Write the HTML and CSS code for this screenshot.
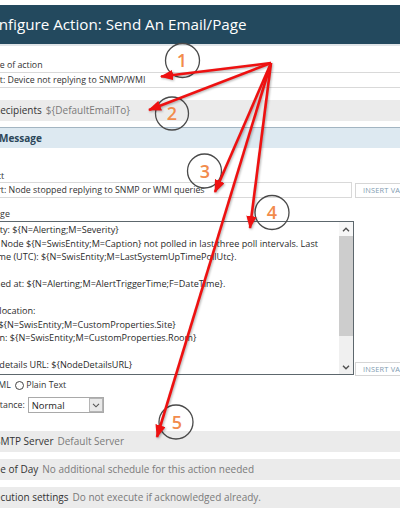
FILE: index.html
```html
<!DOCTYPE html>
<html lang="en">
<head>
<meta charset="utf-8">
<title>Configure Action: Send An Email/Page</title>
<link rel="stylesheet" href="styles.css">
</head>
<body>
<div class="page">
  <div class="hdr">Configure Action: Send An Email/Page</div>
  <div class="hdr-rule"></div>

  <div class="lbl name-lbl">Name of action</div>
  <div class="inp name-inp">Alert: Device not replying to SNMP/WMI</div>

  <div class="bar bar-recip"><span class="bar-key">Recipients</span><span class="bar-val">${DefaultEmailTo}</span></div>

  <div class="sect">Message</div>
  <div class="sect-body">
    <div class="lbl subj-lbl">Subject</div>
    <div class="row">
      <div class="inp subj-inp">Alert: Node stopped replying to SNMP or WMI queries</div>
      <div class="btn subj-btn">Insert Variable</div>
    </div>

    <div class="lbl msg-lbl">Message</div>
    <div class="row row-end">
      <div class="ta">
        <div class="ta-text">
          <div class="ln">Severity: ${N=Alerting;M=Severity}</div>
          <div class="ln">Issue: Node ${N=SwisEntity;M=Caption} not polled in last three poll intervals. Last</div>
          <div class="ln">poll time (UTC): ${N=SwisEntity;M=LastSystemUpTimePollUtc}.</div>
          <div class="ln"></div>
          <div class="ln">Matched at: ${N=Alerting;M=AlertTriggerTime;F=DateTime}.</div>
          <div class="ln"></div>
          <div class="ln">Node location:</div>
          <div class="ln">Area: ${N=SwisEntity;M=CustomProperties.Site}</div>
          <div class="ln">Section: ${N=SwisEntity;M=CustomProperties.Room}</div>
          <div class="ln"></div>
          <div class="ln">Node details URL: ${NodeDetailsURL}</div>
        </div>
        <div class="sb">
          <div class="sb-btn sb-up"><svg width="8" height="5" viewBox="0 0 8 5"><polyline points="1,4.2 4,1.2 7,4.2" fill="none" stroke="#505050" stroke-width="1.4"/></svg></div>
          <div class="sb-thumb"></div>
          <div class="sb-track"></div>
          <div class="sb-btn sb-down"><svg width="8" height="5" viewBox="0 0 8 5"><polyline points="1,0.8 4,3.8 7,0.8" fill="none" stroke="#505050" stroke-width="1.4"/></svg></div>
        </div>
      </div>
      <div class="btn msg-btn">Insert Variable</div>
    </div>

    <div class="fmt">
      <span class="radio radio-on"></span><span class="fmt-html">HTML</span><span class="radio"></span><span class="fmt-plain">Plain Text</span>
    </div>

    <div class="imp">
      <span class="imp-lbl">Importance:</span>
      <div class="sel"><span class="sel-val">Normal</span><span class="sel-arrow"><svg width="8" height="5" viewBox="0 0 8 5"><polyline points="1,0.8 4,3.8 7,0.8" fill="none" stroke="#555" stroke-width="1.1"/></svg></span></div>
    </div>

    <div class="bar bar-smtp"><span class="bar-key">SMTP Server</span><span class="bar-val">Default Server</span></div>
  </div>

  <div class="bar bar-time"><span class="bar-key">Time of Day</span><span class="bar-val">No additional schedule for this action needed</span></div>
  <div class="bar bar-exec"><span class="bar-key">Execution settings</span><span class="bar-val">Do not execute if acknowledged already.</span></div>
</div>

<svg class="annot" width="400" height="516" viewBox="0 0 400 516">
  <defs>
    <marker id="ah" markerWidth="5" markerHeight="4" refX="4.6" refY="2" orient="auto" markerUnits="strokeWidth">
      <path d="M0,0 L5,2 L0,4 Z" fill="#ee1111"/>
    </marker>
  </defs>
  <g class="circles" fill="none" stroke="#4a4a4a" stroke-width="1.3">
    <circle cx="182.5" cy="60.5" r="17"/>
    <circle cx="172" cy="113.5" r="16.5"/>
    <circle cx="204.5" cy="171" r="17"/>
    <circle cx="272" cy="212.5" r="17"/>
    <circle cx="176" cy="422" r="17"/>
  </g>
  <g class="nums" fill="#f28b4c" font-size="18" font-weight="600" text-anchor="middle">
    <text x="182" y="67">1</text>
    <text x="172" y="120">2</text>
    <text x="205" y="178">3</text>
    <text x="272" y="219">4</text>
    <text x="177" y="429">5</text>
  </g>
  <g class="arrows" stroke="#ee1111" stroke-width="2.6" fill="none">
    <line x1="271" y1="63" x2="161" y2="76.5" marker-end="url(#ah)"/>
    <line x1="271" y1="63" x2="149" y2="110" marker-end="url(#ah)"/>
    <line x1="271" y1="63" x2="215" y2="192" marker-end="url(#ah)"/>
    <line x1="271" y1="63" x2="250" y2="228" marker-end="url(#ah)"/>
    <line x1="271" y1="63" x2="157" y2="437" marker-end="url(#ah)"/>
  </g>
</svg>
</body>
</html>
```
FILE: styles.css
```css
* { box-sizing: border-box; }

html, body {
  margin: 0;
  padding: 0;
  background: #ffffff;
}

body {
  width: 400px;
  height: 516px;
  overflow: hidden;
  position: relative;
  font-family: "Open Sans", "Noto Sans", sans-serif;
  color: #333333;
}

.page {
  margin-left: -30px;
  width: 470px;
  padding-top: 5px;
}

.hdr {
  height: 39px;
  line-height: 39px;
  background: #23495e;
  color: #ffffff;
  font-size: 15.2px;
  padding-left: 10px;
  white-space: nowrap;
}

.hdr-rule {
  height: 2px;
  background: #e1e5e8;
}

.lbl {
  font-size: 8.8px;
  line-height: 11px;
  height: 11px;
  white-space: nowrap;
  color: #333333;
}

.name-lbl { margin-top: 14px; padding-left: 10px; }

.inp {
  height: 16px;
  border: 1px solid #d9d9d9;
  background: #ffffff;
  font-size: 8.8px;
  line-height: 14px;
  padding: 0 4px;
  white-space: nowrap;
  overflow: hidden;
  color: #333333;
}

.name-inp {
  margin-top: 1px;
  margin-left: 8.5px;
  width: 460px;
}

.bar {
  height: 21px;
  line-height: 21px;
  background: #ebebeb;
  font-size: 10px;
  white-space: nowrap;
  overflow: hidden;
}

.bar-key { color: #333333; margin-right: 4px; }
.bar-val { color: #7a7a7a; }

.bar-recip { margin-top: 12px; padding-left: 24px; }

.sect {
  margin-top: 6px;
  height: 21px;
  line-height: 20px;
  border-top: 1px solid #a3b5c2;
  background: #dde9f1;
  color: #2b4659;
  font-weight: 700;
  font-size: 10px;
  padding-left: 29px;
}

.sect-body { padding-left: 4px; }

.subj-lbl { margin-top: 23px; }

.row { display: flex; }
.row-end { align-items: flex-end; margin-top: 1px; }

.subj-inp {
  margin-left: 6px;
  width: 372px;
  padding-left: 3.5px;
}

.btn {
  height: 15px;
  border: 1px solid #d6d6d6;
  background: #ffffff;
  color: #7f9bb0;
  font-size: 7.4px;
  line-height: 13px;
  text-transform: uppercase;
  letter-spacing: 0.2px;
  padding-left: 7px;
  width: 70px;
  white-space: nowrap;
  overflow: hidden;
}

.subj-btn { margin-left: 3px; margin-top: 0.5px; }

.msg-lbl { margin-top: 11px; }

.ta {
  margin-left: -3px;
  width: 383px;
  height: 154px;
  border: 1px solid #5d676d;
  display: flex;
  background: #ffffff;
}

.ta-text {
  flex: 1;
  padding: 1px 0 0 2px;
  font-size: 9.1px;
  line-height: 13.5px;
  color: #2a2a2a;
  overflow: hidden;
}

.ln { height: 13.5px; white-space: pre; }

.sb {
  width: 14px;
  display: flex;
  flex-direction: column;
  background: #f0f0f0;
}

.sb-btn {
  height: 14px;
  display: flex;
  align-items: center;
  justify-content: center;
}

.sb-up { background: #f7f7f7; }
.sb-down { background: #f0f0f0; }

.sb-thumb { height: 100px; background: #cdcdcd; }
.sb-track { flex: 1; }

.msg-btn { margin-left: 1px; margin-bottom: -1px; height: 14px; line-height: 12px; }

.fmt {
  margin-top: 4px;
  height: 12px;
  display: flex;
  align-items: center;
  font-size: 8.8px;
  white-space: nowrap;
  padding-left: 2px;
}

.radio {
  width: 9px;
  height: 9px;
  border: 1px solid #444444;
  border-radius: 50%;
  background: #ffffff;
  flex: none;
}

.radio-on { margin-right: 2px; }
.fmt-html { margin-right: 4px; }
.fmt-plain { margin-left: 2.5px; }

.imp {
  margin-top: 6px;
  display: flex;
  align-items: center;
  font-size: 8.8px;
  padding-left: 1px;
}

.imp-lbl { white-space: nowrap; }

.sel {
  margin-left: 3px;
  width: 76px;
  height: 16px;
  border: 1px solid #a9a9a9;
  display: flex;
  align-items: center;
  background: #ffffff;
}

.sel-val { flex: 1; padding-left: 3px; font-size: 9.4px; color: #222222; }

.sel-arrow {
  width: 14px;
  height: 14px;
  border: 1px solid #b5b5b5;
  background: #e9e9e9;
  display: flex;
  align-items: center;
  justify-content: center;
}

.bar-smtp { margin-top: 18px; padding-left: 21px; }
.bar-time { margin-top: 7px; padding-left: 13px; }
.bar-exec { margin-top: 7px; padding-left: 14px; }

.annot {
  position: absolute;
  left: 0;
  top: 0;
  pointer-events: none;
}

.nums { font-family: "Open Sans", "Noto Sans", sans-serif; }

.arrows { filter: drop-shadow(1px 1px 1px rgba(0, 0, 0, 0.3)); }
```
